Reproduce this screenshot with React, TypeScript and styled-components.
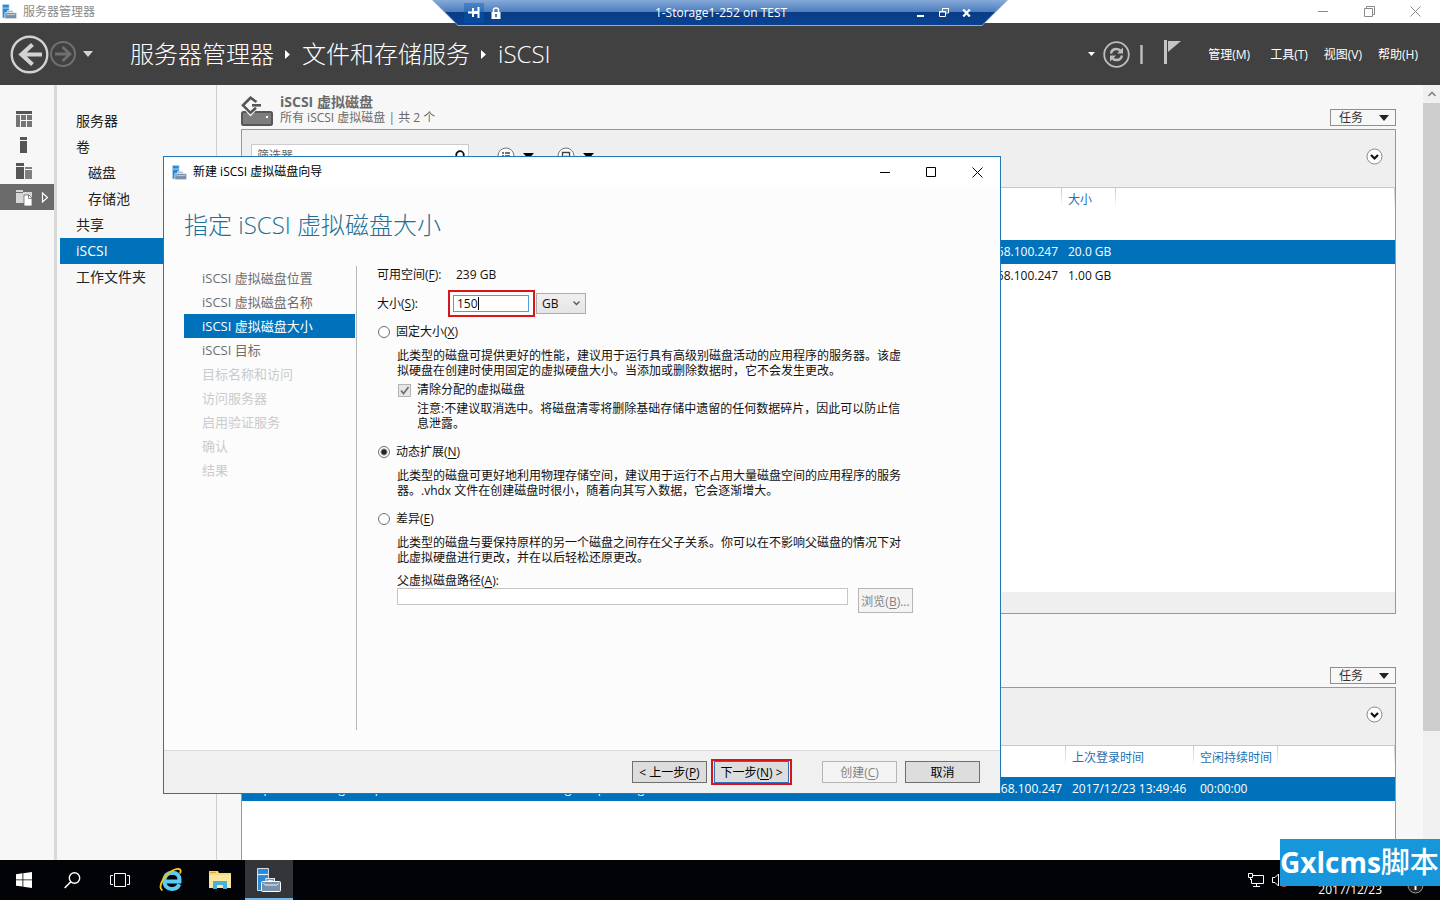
import React from "react";
import styled, { createGlobalStyle } from "styled-components";

const accent = "#0072bc";

const GlobalStyle = createGlobalStyle`
  * { box-sizing: border-box; }
  body { margin: 0; }
  body, button, input, select {
    font-family: "Open Sans", "Noto Sans CJK SC", sans-serif;
    font-size: 12px;
    line-height: 18px;
    color: #111;
  }
  button, input, select { margin: 0; padding: 0; border-radius: 0; }
  button { border: 0; background: transparent; }
  svg { display: block; flex: none; }
  u { text-underline-offset: 2px; }
`;

const Page = styled.div`
  position: relative;
  display: flex;
  flex-direction: column;
  height: 100vh;
  min-height: 860px;
  overflow: hidden;
  background: #f7f7f7;
`;

/* ---------- title bars ---------- */

const TitleBar = styled.header<{ $tall?: boolean; $inactive?: boolean }>`
  display: flex;
  align-items: center;
  flex: none;
  height: ${(p) => (p.$tall ? 30 : 23)}px;
  padding-left: ${(p) => (p.$tall ? 8 : 2)}px;
  padding-right: ${(p) => (p.$tall ? 0 : 2)}px;
  background: #fff;
  color: ${(p) => (p.$inactive ? "#8a8a8a" : "#000")};
`;

const TitleText = styled.span`
  flex: 1;
  margin-left: 6px;
  white-space: nowrap;
`;

const WindowButton = styled.button`
  display: flex;
  align-items: center;
  justify-content: center;
  width: 46px;
  height: 100%;
  color: inherit;
`;

const RemoteEdge = styled.div`
  position: absolute;
  top: 0;
  left: 50%;
  width: 576px;
  height: 26px;
  transform: translateX(-50%);
  clip-path: polygon(0 0, 100% 0, 550px 100%, 26px 100%);
  background: #8fa9cf;
`;

const RemoteBar = styled.div`
  display: flex;
  align-items: center;
  height: 25px;
  padding: 0 30px 0 32px;
  clip-path: polygon(1px 0, 575px 0, 550px 100%, 26px 100%);
  background: linear-gradient(#86a9d8 0, #4b7dbd 12px, #093c84 12px, #0a4291 100%);
  color: #fff;
`;

const RemoteSide = styled.div<{ $end?: boolean }>`
  display: flex;
  flex: 1;
  align-items: center;
  justify-content: ${(p) => (p.$end ? "flex-end" : "flex-start")};
`;

const RemoteButton = styled.button<{ $on?: boolean }>`
  display: flex;
  align-items: center;
  justify-content: center;
  width: ${(p) => (p.$on ? 20 : 23)}px;
  height: 20px;
  color: #fff;
  background: ${(p) => (p.$on ? "rgba(10, 90, 185, 0.4)" : "transparent")};
`;

/* ---------- dark header ---------- */

const Header = styled.div`
  display: flex;
  align-items: center;
  flex: none;
  height: 62px;
  padding: 0 22px 0 10px;
  background: #414141;
  color: #fff;
`;

const HeaderButton = styled.button`
  display: flex;
  align-items: center;
  justify-content: center;
`;

const Crumbs = styled.nav`
  display: flex;
  align-items: center;
  flex: 1;
  margin-left: 36px;
  white-space: nowrap;
`;

const Crumb = styled.a`
  color: #fff;
  font-size: 24px;
  line-height: 36px;
  font-weight: 300;
  text-decoration: none;
`;

const CrumbArrow = styled.svg`
  margin: 0 12px 0 11px;
`;

const HeaderTools = styled.div`
  display: flex;
  align-items: center;
  gap: 8px;
  margin-right: 24px;
`;

const MenuBar = styled.nav`
  display: flex;
  gap: 16px;
`;

const MenuButton = styled.button`
  padding-top: 2px;
  color: #fff;
  white-space: nowrap;
  &:first-child { margin-right: 4px; }
`;

/* ---------- body ---------- */

const Body = styled.div`
  display: flex;
  flex: 1;
  min-height: 0;
`;

const Rail = styled.nav`
  display: flex;
  flex-direction: column;
  flex: none;
  width: 57px;
  padding-top: 21px;
  border-right: 3px solid #d9d9d9;
`;

const RailButton = styled.button<{ $on?: boolean }>`
  display: flex;
  align-items: center;
  gap: 8px;
  height: 26px;
  padding-left: 15px;
  background: ${(p) => (p.$on ? "#6b6b6b" : "transparent")};
`;

const Side = styled.nav`
  display: flex;
  flex-direction: column;
  flex: none;
  width: 160px;
  padding: 23px 0 0 3px;
  border-right: 1px solid #cfcfcf;
`;

const SideLink = styled.a<{ $on?: boolean; $deep?: boolean }>`
  height: 26px;
  padding-left: ${(p) => (p.$deep ? 28 : 16)}px;
  font-size: 14px;
  line-height: 26px;
  color: ${(p) => (p.$on ? "#fff" : "#222")};
  background: ${(p) => (p.$on ? accent : "transparent")};
  text-decoration: none;
`;

const Content = styled.main`
  flex: 1;
  min-width: 0;
  padding: 0 27px 0 24px;
  overflow: hidden;
`;

const Section = styled.section`
  & + & { margin-top: 29px; }
`;

const SectionHead = styled.div`
  display: flex;
  align-items: flex-end;
  gap: 7px;
  height: 44px;
  padding-bottom: 3px;
`;

const SectionTitles = styled.div`
  flex: 1;
  color: #6a6a6a;
`;

const SectionTitle = styled.h2`
  margin: 0;
  font-size: 14px;
  line-height: 16px;
  font-weight: 700;
`;

const SectionSub = styled.p`
  margin: 0;
  line-height: 16px;
`;

const TaskButton = styled.button`
  display: flex;
  align-items: center;
  justify-content: space-between;
  width: 66px;
  height: 17px;
  padding: 0 6px 0 8px;
  border: 1px solid #8f8f8f;
  line-height: 15px;
  color: #333;
`;

const Panel = styled.div<{ $tall?: boolean }>`
  display: flex;
  flex-direction: column;
  min-height: ${(p) => (p.$tall ? 485 : 320)}px;
  border: 1px solid #999;
  background: #fff;
`;

const PanelTools = styled.div`
  display: flex;
  align-items: center;
  height: 58px;
  padding: 0 12px 5px 9px;
  border-bottom: 1px solid #c8c8c8;
  background: #efefef;
`;

const SearchBox = styled.label`
  display: flex;
  align-items: center;
  width: 218px;
  height: 24px;
  margin-right: 28px;
  padding: 0 3px 0 5px;
  border: 1px solid #ccc;
  background: #fff;
`;

const SearchInput = styled.input`
  flex: 1;
  min-width: 0;
  border: 0;
  background: transparent;
  outline: none;
  &::placeholder { color: #666; opacity: 1; }
`;

const ToolButton = styled.button`
  display: flex;
  align-items: center;
  gap: 8px;
  margin-right: 23px;
`;

const Expand = styled.button`
  margin-left: auto;
`;

const PanelFoot = styled.div`
  height: 21px;
  margin-top: auto;
  background: #efefef;
`;

const Grid = styled.table`
  width: 100%;
  table-layout: fixed;
  border-collapse: collapse;
`;

const Col = styled.col<{ $w?: number }>`
  width: ${(p) => (p.$w ? `${p.$w}px` : "auto")};
`;

const HeadCell = styled.th<{ $h: number }>`
  height: ${(p) => p.$h}px;
  padding: 3px 0 0 6px;
  font-weight: 400;
  text-align: left;
  vertical-align: top;
  white-space: nowrap;
  color: #1f70b0;
  background: linear-gradient(#c8c8c8, #fff) right top / 1px 20px no-repeat;
`;

const GridRow = styled.tr<{ $on?: boolean }>`
  height: 24px;
  color: ${(p) => (p.$on ? "#fff" : "#111")};
  background: ${(p) => (p.$on ? accent : "#fff")};
`;

const Cell = styled.td<{ $end?: boolean }>`
  padding: 0 4px 0 6px;
  text-align: ${(p) => (p.$end ? "right" : "left")};
  white-space: nowrap;
`;

const Scroll = styled.div`
  display: flex;
  flex-direction: column;
  align-items: center;
  flex: none;
  width: 17px;
  background: #f0f0f0;
`;

const ScrollUp = styled.button`
  display: flex;
  align-items: center;
  justify-content: center;
  width: 17px;
  height: 18px;
`;

const ScrollThumb = styled.div`
  width: 100%;
  height: 81%;
  background: #cdcdcd;
`;

/* ---------- wizard window ---------- */

const Wizard = styled.section`
  position: absolute;
  left: 163px;
  top: 156px;
  display: flex;
  flex-direction: column;
  width: 838px;
  height: 638px;
  border: 1px solid #2178b8;
  background: #fcfcfc;
`;

const WizardTitle = styled.h1`
  margin: 19px 20px 23px;
  font-size: 24px;
  line-height: 37px;
  font-weight: 300;
  color: #1f6f96;
`;

const WizardMain = styled.div`
  display: flex;
  flex: 1;
  padding: 0 20px 20px;
`;

const Steps = styled.ol`
  flex: none;
  width: 173px;
  margin: 0;
  padding: 0 1px 0 0;
  border-right: 1px solid #b9b9b9;
  list-style: none;
`;

const Step = styled.li<{ $state?: "on" | "off" }>`
  height: 24px;
  padding-left: 18px;
  font-size: 13px;
  line-height: 25px;
  color: ${(p) => (p.$state === "on" ? "#fff" : p.$state === "off" ? "#cbcbcb" : "#6e6e6e")};
  background: ${(p) => (p.$state === "on" ? accent : "transparent")};
`;

const Form = styled.form`
  flex: 1;
  padding-left: 20px;
`;

const FieldRow = styled.div`
  display: flex;
  align-items: center;
  margin-bottom: 6px;
`;

const FieldName = styled.label`
  width: 79px;
`;

const RedMark = styled.div`
  display: flex;
  padding: 3px;
  border: 2px solid #d9141b;
`;

const SizeMark = styled(RedMark)`
  position: relative;
  margin: 0 1px 0 -8px;
  width: 87px;
`;

const SizeInput = styled.input`
  width: 76px;
  height: 17px;
  padding: 0 3px;
  border: 1px solid #5a9bdc;
  outline: none;
  background: #fff;
  caret-color: transparent;
`;

const TextCaret = styled.span`
  position: absolute;
  left: 28px;
  top: 5px;
  width: 1px;
  height: 13px;
  background: #000;
`;

const UnitBox = styled.div`
  position: relative;
  display: flex;
  align-items: center;
`;

const UnitSelect = styled.select`
  appearance: none;
  width: 50px;
  height: 21px;
  padding: 0 0 0 5px;
  border: 1px solid #acacac;
  background: linear-gradient(#f0f0f0, #e5e5e5);
`;

const UnitArrow = styled.svg`
  position: absolute;
  right: 6px;
  pointer-events: none;
`;

const Choice = styled.label<{ $nested?: boolean }>`
  display: flex;
  align-items: center;
  gap: 6px;
  width: fit-content;
  height: 18px;
  margin: ${(p) => (p.$nested ? "3px 0 2px 21px" : "0 0 7px 1px")};
`;

const Radio = styled.input`
  appearance: none;
  width: 12px;
  height: 12px;
  border: 1px solid #707070;
  border-radius: 50%;
  background: #fff;
  &:checked { background: radial-gradient(circle, #222 2px, #fff 4px); }
`;

const Tick = styled.span`
  position: relative;
  display: flex;
  width: 13px;
  height: 13px;
  svg { position: absolute; inset: 0; pointer-events: none; }
`;

const TickInput = styled.input`
  appearance: none;
  width: 13px;
  height: 13px;
  border: 1px solid #b4b4b4;
  background: #e6e6e6;
`;

const Note = styled.p<{ $nested?: boolean }>`
  width: ${(p) => (p.$nested ? 488 : 508)}px;
  margin: 0 0 ${(p) => (p.$nested ? 12 : 0)}px ${(p) => (p.$nested ? 40 : 20)}px;
  line-height: 15px;
`;

const LooseNote = styled(Note)`
  margin-bottom: 12px;
`;

const PathBlock = styled.div`
  display: grid;
  grid-template-columns: 451px 55px;
  column-gap: 10px;
  margin: 8px 0 0 20px;
`;

const PathLabel = styled.label`
  grid-column: 1 / 3;
  line-height: 15px;
`;

const PathInput = styled.input`
  width: 100%;
  height: 17px;
  border: 1px solid #c6c6c6;
  background: #fff;
`;

const PushButton = styled.button<{ $focus?: boolean }>`
  width: 75px;
  height: 22px;
  padding-top: 1px;
  border: 1px solid #707070;
  background: #dddddd;
  color: #000;
  line-height: 19px;
  white-space: nowrap;
  ${(p) => (p.$focus ? "border-color: #2f6fc0;" : "")}
  &:disabled {
    border-color: #b5b5b5;
    background: #f4f4f4;
    color: #838383;
  }
`;

const BrowseButton = styled(PushButton)`
  width: 55px;
  height: 25px;
`;

const WizardFoot = styled.footer`
  display: flex;
  align-items: center;
  justify-content: flex-end;
  height: 43px;
  padding-right: 20px;
  border-top: 1px solid #dcdcdc;
  background: #f0f0f0;
`;

const NextMark = styled(RedMark)`
  margin: 0 30px 0 4px;
  padding: 0 1px;
`;

const CancelButton = styled(PushButton)`
  margin-left: 8px;
`;

/* ---------- taskbar ---------- */

const Taskbar = styled.footer`
  display: flex;
  flex: none;
  height: 40px;
  background: #020306;
`;

const TaskGroup = styled.div<{ $apart?: boolean }>`
  display: flex;
  gap: ${(p) => (p.$apart ? 1 : 0)}px;
  margin-left: ${(p) => (p.$apart ? 3 : 0)}px;
`;

const TaskItem = styled.button<{ $on?: boolean }>`
  display: flex;
  align-items: center;
  justify-content: center;
  width: 48px;
  height: 40px;
  border-bottom: 2px solid ${(p) => (p.$on ? "#76b9ed" : "transparent")};
  border-top: 2px solid transparent;
  background: ${(p) => (p.$on ? "#343539" : "transparent")};
`;

const Tray = styled.div`
  display: flex;
  align-items: center;
  gap: 8px;
  margin-left: auto;
  padding-right: 16px;
`;

const TrayDate = styled.time`
  align-self: flex-end;
  margin: 0 17px 0 21px;
  color: #fff;
  line-height: 20px;
`;

const Watermark = styled.div`
  position: absolute;
  right: 0;
  bottom: 14px;
  width: 160px;
  height: 47px;
  background: #1896dc;
  color: #fff;
  font-size: 28px;
  line-height: 46px;
  font-weight: 700;
  white-space: nowrap;
`;

const WatermarkTail = styled.span`
  font-size: 29px;
  font-weight: 500;
`;

/* ---------- drawings ---------- */

const ServerIcon = ({ size = 15, outline = "#fff" }: { size?: number; outline?: string }) => (
  <svg width={size} height={size} viewBox="0 0 24 24">
    <path d="M.5.500h11v22H.5z" fill="#2a8ad4" stroke={outline} strokeWidth=".8" />
    <path d="M1 6.500h10" stroke="#e4f1fb" strokeWidth="1.200" />
    <path d="M10 14v-2.500h6.500V14" fill="none" stroke="#fff" strokeWidth="3" />
    <path d="M10 14v-2.500h6.500V14" fill="none" stroke="#7d94ad" strokeWidth="1.400" />
    <rect x="4.500" y="13.500" width="19" height="10" rx="1" fill="#7790ac" stroke="#fff" />
    <path d="M6.500 15.500l2 1.500h11l2-1.500" fill="none" stroke="#fff" strokeWidth=".9" />
  </svg>
);

const MinIcon = ({ y = 6 }: { y?: number }) => (
  <svg width="11" height="11" viewBox="0 0 11 11">
    <path d={`M0 ${y - 0.5}h10`} stroke="currentColor" />
  </svg>
);

const CloseIcon = () => (
  <svg width="11" height="11" viewBox="0 0 11 11">
    <path d="M.5.5l10 10M10.500.5l-10 10" stroke="currentColor" />
  </svg>
);

const Caret = ({ w = 10, h = 5, fill = "#222" }: { w?: number; h?: number; fill?: string }) => (
  <svg width={w} height={h} viewBox="0 0 10 5" preserveAspectRatio="none">
    <path d="M0 0h10L5 5z" fill={fill} />
  </svg>
);

const ExpandIcon = () => (
  <svg width="17" height="17" viewBox="0 0 17 17">
    <circle cx="8.500" cy="8.500" r="7.500" fill="#fff" stroke="#888" />
    <path d="M5 7l3.500 3.500L12 7" fill="none" stroke="#111" strokeWidth="2.200" />
  </svg>
);

const DiskIcon = () => (
  <svg width="32" height="30" viewBox="0 0 32 30">
    <rect x="1" y="16" width="30" height="13" rx="1.500" fill="#7d7d7d" stroke="#565656" strokeWidth="2" />
    <path d="M9.500 20.500L0 10h7l2.500 1L12 10h7z" fill="#f7f7f7" />
    <path d="M15.500 6L9.500 1.800 2 9.300l7.500 7.500 5.500-5" fill="none" stroke="#565656" strokeWidth="2.600" />
    <path d="M11 9.300h9" stroke="#565656" strokeWidth="2.600" />
    <path d="M25 20h2v2h-2z" fill="#fff" />
  </svg>
);

const tasksButton = (
  <TaskButton type="button">
    任务
    <Caret w={10} h={6} />
  </TaskButton>
);

const sideItems: { text: string; deep?: boolean; on?: boolean }[] = [
  { text: "服务器" },
  { text: "卷" },
  { text: "磁盘", deep: true },
  { text: "存储池", deep: true },
  { text: "共享" },
  { text: "iSCSI", on: true },
  { text: "工作文件夹" },
];

const steps: { text: string; state?: "on" | "off" }[] = [
  { text: "iSCSI 虚拟磁盘位置" },
  { text: "iSCSI 虚拟磁盘名称" },
  { text: "iSCSI 虚拟磁盘大小", state: "on" },
  { text: "iSCSI 目标" },
  { text: "目标名称和访问", state: "off" },
  { text: "访问服务器", state: "off" },
  { text: "启用验证服务", state: "off" },
  { text: "确认", state: "off" },
  { text: "结果", state: "off" },
];

const menus = ["管理(M)", "工具(T)", "视图(V)", "帮助(H)"];

const RemoteConnection = () => (
  <RemoteEdge>
    <RemoteBar>
      <RemoteSide>
        <RemoteButton $on aria-label="固定">
          <svg width="12" height="11" viewBox="0 0 12 11">
            <path d="M0 5.500h5M5 1v9M10.500 0v11" stroke="currentColor" strokeWidth="2" />
            <path d="M5 5.500h5" stroke="currentColor" strokeWidth="3" />
          </svg>
        </RemoteButton>
        <RemoteButton aria-label="安全">
          <svg width="10" height="12" viewBox="0 0 10 12">
            <path d="M2.500 6V3q0-2 2.500-2t2.500 2v3" fill="none" stroke="currentColor" strokeWidth="1.500" />
            <path d="M.5 5h9v7h-9z" fill="currentColor" />
            <path d="M4.300 7h1.400v3H4.300z" fill="#0a3f8c" />
          </svg>
        </RemoteButton>
      </RemoteSide>
      <span>1-Storage1-252 on TEST</span>
      <RemoteSide $end>
        <RemoteButton aria-label="最小化">
          <svg width="7" height="11" viewBox="0 0 7 11">
            <path d="M0 9h7" stroke="currentColor" strokeWidth="2" />
          </svg>
        </RemoteButton>
        <RemoteButton aria-label="还原">
          <svg width="10" height="11" viewBox="0 0 10 11">
            <path d="M3.500 4V1.500h6V6H7M3 1.500h7M.5 4.500h6v5h-6zM0 5h7" fill="none" stroke="currentColor" />
          </svg>
        </RemoteButton>
        <RemoteButton aria-label="关闭">
          <svg width="9" height="8" viewBox="0 0 9 8">
            <path d="M1.200.5l6.600 7M7.800.5l-6.600 7" stroke="currentColor" strokeWidth="2.200" />
          </svg>
        </RemoteButton>
      </RemoteSide>
    </RemoteBar>
  </RemoteEdge>
);

const AppHeader = () => (
  <Header>
    <HeaderButton aria-label="后退">
      <svg width="39" height="39" viewBox="0 0 39 39">
        <circle cx="19.500" cy="19.500" r="17.800" fill="none" stroke="#d2d2d2" strokeWidth="2.400" />
        <path d="M32 19.500H11M22.500 9.500L11.500 19.500l11 10" fill="none" stroke="#d2d2d2" strokeWidth="4.200" />
      </svg>
    </HeaderButton>
    <HeaderButton aria-label="前进">
      <svg width="28" height="28" viewBox="0 0 28 28">
        <circle cx="14" cy="14" r="12" fill="none" stroke="#707070" strokeWidth="2" />
        <path d="M6 14h14M13.500 7L21 14l-7.500 7" fill="none" stroke="#707070" strokeWidth="2.800" />
      </svg>
    </HeaderButton>
    <HeaderButton aria-label="历史记录">
      <svg width="17" height="8" viewBox="0 0 17 8">
        <path d="M6 1h10l-5 6z" fill="#d2d2d2" />
      </svg>
    </HeaderButton>
    <Crumbs>
      <Crumb href="#">服务器管理器</Crumb>
      <CrumbArrow width="5" height="9" viewBox="0 0 5 9">
        <path d="M0 0l5 4.500L0 9z" fill="#fff" />
      </CrumbArrow>
      <Crumb href="#">文件和存储服务</Crumb>
      <CrumbArrow width="5" height="9" viewBox="0 0 5 9">
        <path d="M0 0l5 4.500L0 9z" fill="#fff" />
      </CrumbArrow>
      <Crumb href="#">iSCSI</Crumb>
    </Crumbs>
    <HeaderTools>
      <Caret w={7} h={4} fill="#fff" />
      <HeaderButton aria-label="刷新">
        <svg width="27" height="27" viewBox="0 0 27 27">
          <circle cx="13.500" cy="13.500" r="12.300" fill="none" stroke="#bdbdbd" strokeWidth="1.800" />
          <path d="M8 12.500q.8-4.500 5.500-4.500 3 0 4.800 2.500M19 14.500q-.8 4.500-5.500 4.500-3 0-4.800-2.500" fill="none" stroke="#bdbdbd" strokeWidth="2.400" />
          <path d="M20 6.500v6h-6zM7 20.500v-6h6z" fill="#bdbdbd" />
        </svg>
      </HeaderButton>
      <svg width="6" height="19" viewBox="0 0 6 19">
        <path d="M3.500 0v19" stroke="#bdbdbd" strokeWidth="2.500" />
      </svg>
      <HeaderButton aria-label="通知">
        <svg width="32" height="28" viewBox="0 0 32 28">
          <path d="M12 0h3v24h-3z" fill="#c4c4c4" />
          <path d="M16 1h13L16 12z" fill="#c4c4c4" />
        </svg>
      </HeaderButton>
    </HeaderTools>
    <MenuBar>
      {menus.map((m) => (
        <MenuButton key={m}>{m}</MenuButton>
      ))}
    </MenuBar>
  </Header>
);

const IconRail = () => (
  <Rail>
    <RailButton aria-label="仪表板">
      <svg width="18" height="16" viewBox="0 0 18 16">
        <path d="M1 0h16v3H1z" fill="#555" />
        <path d="M1 4h4v12H1zM6 4h5v5H6zM12 4h5v5h-5zM6 10h5v6H6zM12 10h5v6h-5z" fill="#757575" />
      </svg>
    </RailButton>
    <RailButton aria-label="本地服务器">
      <svg width="18" height="16" viewBox="0 0 18 16">
        <path d="M5 0h7v3H5zM5 4h7v12H5z" fill="#555" />
      </svg>
    </RailButton>
    <RailButton aria-label="所有服务器">
      <svg width="18" height="16" viewBox="0 0 18 16">
        <path d="M1 0h8v3H1zM1 4h8v12H1z" fill="#555" />
        <path d="M10 4h7v2h-7zM10 7h7v9h-7z" fill="#808080" />
      </svg>
    </RailButton>
    <RailButton $on aria-label="文件和存储服务">
      <svg width="18" height="17" viewBox="0 0 18 17">
        <path d="M1 1h7v2h9v11H1z" fill="#d6d6d6" />
        <path d="M1 3.500h7" stroke="#6b6b6b" />
        <path d="M9 6h5l3 3v8H9z" fill="#fff" stroke="#6b6b6b" strokeWidth=".8" />
        <path d="M13.500 6v3.500H17" fill="none" stroke="#6b6b6b" strokeWidth=".8" />
      </svg>
      <svg width="8" height="11" viewBox="0 0 8 11">
        <path d="M1.500 1l5 4.500-5 4.500z" fill="none" stroke="#fff" strokeWidth="1.200" />
      </svg>
    </RailButton>
  </Rail>
);

const WizardWindow = () => (
  <Wizard role="dialog" aria-labelledby="wizard-title">
    <TitleBar $tall>
      <ServerIcon />
      <TitleText>新建 iSCSI 虚拟磁盘向导</TitleText>
      <WindowButton aria-label="最小化"><MinIcon /></WindowButton>
      <WindowButton aria-label="最大化">
        <svg width="10" height="10" viewBox="0 0 10 10">
          <path d="M.5.5h9v9h-9z" fill="none" stroke="currentColor" />
        </svg>
      </WindowButton>
      <WindowButton aria-label="关闭"><CloseIcon /></WindowButton>
    </TitleBar>
    <WizardTitle id="wizard-title">指定 iSCSI 虚拟磁盘大小</WizardTitle>
    <WizardMain>
      <Steps>
        {steps.map((s) => (
          <Step key={s.text} $state={s.state}>{s.text}</Step>
        ))}
      </Steps>
      <Form onSubmit={(e) => e.preventDefault()}>
        <FieldRow>
          <FieldName as="span">可用空间(<u>F</u>):</FieldName>
          <span>239 GB</span>
        </FieldRow>
        <FieldRow>
          <FieldName htmlFor="size">大小(<u>S</u>):</FieldName>
          <SizeMark>
            <SizeInput id="size" defaultValue="150" autoFocus />
            <TextCaret />
          </SizeMark>
          <UnitBox>
            <UnitSelect aria-label="单位" defaultValue="GB">
              <option>GB</option>
            </UnitSelect>
            <UnitArrow width="7" height="5" viewBox="0 0 7 5">
              <path d="M.5.5l3 3 3-3" fill="none" stroke="#555" strokeWidth="1.300" />
            </UnitArrow>
          </UnitBox>
        </FieldRow>
        <Choice>
          <Radio type="radio" name="kind" />
          <span>固定大小(<u>X</u>)</span>
        </Choice>
        <Note>此类型的磁盘可提供更好的性能，建议用于运行具有高级别磁盘活动的应用程序的服务器。该虚拟硬盘在创建时使用固定的虚拟硬盘大小。当添加或删除数据时，它不会发生更改。</Note>
        <Choice $nested>
          <Tick>
            <TickInput type="checkbox" defaultChecked disabled />
            <svg width="13" height="13" viewBox="0 0 13 13">
              <path d="M3 6.500L5.500 9.500 10.500 3" fill="none" stroke="#707070" strokeWidth="1.800" />
            </svg>
          </Tick>
          <span>清除分配的虚拟磁盘</span>
        </Choice>
        <Note $nested>注意:不建议取消选中。将磁盘清零将删除基础存储中遗留的任何数据碎片，因此可以防止信息泄露。</Note>
        <Choice>
          <Radio type="radio" name="kind" defaultChecked />
          <span>动态扩展(<u>N</u>)</span>
        </Choice>
        <LooseNote>此类型的磁盘可更好地利用物理存储空间，建议用于运行不占用大量磁盘空间的应用程序的服务器。.vhdx 文件在创建磁盘时很小，随着向其写入数据，它会逐渐增大。</LooseNote>
        <Choice>
          <Radio type="radio" name="kind" />
          <span>差异(<u>E</u>)</span>
        </Choice>
        <Note>此类型的磁盘与要保持原样的另一个磁盘之间存在父子关系。你可以在不影响父磁盘的情况下对此虚拟硬盘进行更改，并在以后轻松还原更改。</Note>
        <PathBlock>
          <PathLabel htmlFor="parent">父虚拟磁盘路径(<u>A</u>):</PathLabel>
          <PathInput id="parent" disabled />
          <BrowseButton type="button" disabled>浏览(<u>B</u>)...</BrowseButton>
        </PathBlock>
      </Form>
    </WizardMain>
    <WizardFoot>
      <PushButton>&lt; 上一步(<u>P</u>)</PushButton>
      <NextMark>
        <PushButton $focus>下一步(<u>N</u>) &gt;</PushButton>
      </NextMark>
      <PushButton disabled>创建(<u>C</u>)</PushButton>
      <CancelButton>取消</CancelButton>
    </WizardFoot>
  </Wizard>
);

const TaskbarRow = () => (
  <Taskbar>
    <TaskGroup>
      <TaskItem aria-label="开始">
        <svg width="16" height="16" viewBox="0 0 16 16">
          <path d="M0 2.300L6.500 1.300v6.200H0zM7.300 1.200L16 0v7.500H7.300zM0 8.300h6.500v6.300L0 13.700zM7.300 8.300H16V16l-8.700-1.300z" fill="#fff" />
        </svg>
      </TaskItem>
      <TaskItem aria-label="搜索">
        <svg width="17" height="17" viewBox="0 0 17 17">
          <circle cx="10.500" cy="6" r="5.200" fill="none" stroke="#fff" strokeWidth="1.400" />
          <path d="M6.800 9.700L.7 16" stroke="#fff" strokeWidth="1.600" />
        </svg>
      </TaskItem>
      <TaskItem aria-label="任务视图">
        <svg width="20" height="14" viewBox="0 0 20 14">
          <path d="M4.500.5h11v13h-11zM3 2.500H.5v9H3M17 2.500h2.500v9H17" fill="none" stroke="#fff" />
        </svg>
      </TaskItem>
    </TaskGroup>
    <TaskGroup $apart>
      <TaskItem aria-label="Internet Explorer">
        <svg width="24" height="24" viewBox="0 0 24 24">
          <path d="M5.500 13.500h15q.6-8.500-7.300-8.700Q5.500 5.200 5.300 13q.3 8 8 8 5 0 7-4.700" fill="none" stroke="#5ccbf4" strokeWidth="4" />
          <path d="M3.500 22.500Q-.8 20 4 11.500 10.500 2 18.500.9 23 .8 21 5.500" fill="none" stroke="#f3c51f" strokeWidth="1.900" />
        </svg>
      </TaskItem>
      <TaskItem aria-label="文件资源管理器">
        <svg width="22" height="18" viewBox="0 0 22 18">
          <path d="M0 0h9l1 2h12v15H0z" fill="#f8d978" />
          <path d="M0 4h22v13H0z" fill="#fbe6a0" />
          <path d="M4 18v-8h14v8h-4v-4H8v4z" fill="#45b0dd" />
          <path d="M1 1.500h6" stroke="#e0a82e" />
        </svg>
      </TaskItem>
      <TaskItem $on aria-label="服务器管理器">
        <ServerIcon size={24} />
      </TaskItem>
    </TaskGroup>
    <Tray>
      <svg width="16" height="14" viewBox="0 0 16 14">
        <path d="M5 2.500h10.500v8H3.500V6M5 13.500h7M8.500 11v2.500M.5.500h4v4h-4zM2.500 4.500V7" fill="none" stroke="#fff" />
      </svg>
      <svg width="17" height="14" viewBox="0 0 17 14">
        <path d="M.5 4.500H3l3.500-3.500v12L3 9.500H.5z" fill="none" stroke="#fff" />
        <circle cx="12" cy="10" r="4" fill="#d83b3b" />
      </svg>
      <TrayDate>2017/12/23</TrayDate>
      <svg width="17" height="28" viewBox="0 0 17 28">
        <circle cx="8.500" cy="19.500" r="7.500" fill="#222" stroke="#999" />
        <path d="M8.500 15v9" stroke="#fff" strokeWidth="2" />
      </svg>
    </Tray>
  </Taskbar>
);

export default function App() {
  return (
    <Page>
      <GlobalStyle />
      <TitleBar $inactive>
        <ServerIcon />
        <TitleText>服务器管理器</TitleText>
        <WindowButton aria-label="最小化"><MinIcon /></WindowButton>
        <WindowButton aria-label="还原">
          <svg width="11" height="11" viewBox="0 0 11 11">
            <path d="M.5 2.500h8v8h-8zM2.500 2.500v-2h8v8h-2" fill="none" stroke="currentColor" />
          </svg>
        </WindowButton>
        <WindowButton aria-label="关闭"><CloseIcon /></WindowButton>
      </TitleBar>
      <AppHeader />
      <Body>
        <IconRail />
        <Side>
          {sideItems.map((s) => (
            <SideLink key={s.text} href="#" $on={s.on} $deep={s.deep}>{s.text}</SideLink>
          ))}
        </Side>
        <Content>
          <Section>
            <SectionHead>
              <DiskIcon />
              <SectionTitles>
                <SectionTitle>iSCSI 虚拟磁盘</SectionTitle>
                <SectionSub>所有 iSCSI 虚拟磁盘 | 共 2 个</SectionSub>
              </SectionTitles>
              {tasksButton}
            </SectionHead>
            <Panel $tall>
              <PanelTools>
                <SearchBox>
                  <SearchInput placeholder="筛选器" aria-label="筛选器" />
                  <svg width="12" height="13" viewBox="0 0 12 13">
                    <circle cx="7" cy="5" r="3.800" fill="none" stroke="#111" strokeWidth="1.800" />
                    <path d="M4.500 8L1 12" stroke="#111" strokeWidth="2" />
                  </svg>
                </SearchBox>
                <ToolButton aria-label="筛选条件">
                  <svg width="18" height="18" viewBox="0 0 18 18">
                    <circle cx="9" cy="9" r="8" fill="#fff" stroke="#777" />
                    <path d="M5 6h2M8 6h5M5 9h2M8 9h5M5 12h2M8 12h5" stroke="#444" strokeWidth="1.400" />
                  </svg>
                  <Caret w={11} h={6} fill="#000" />
                </ToolButton>
                <ToolButton aria-label="保存查询">
                  <svg width="18" height="18" viewBox="0 0 18 18">
                    <circle cx="9" cy="9" r="8" fill="#fff" stroke="#777" />
                    <path d="M5.500 5.500h7v7h-7zM7 9.500h4" fill="none" stroke="#444" strokeWidth="1.400" />
                  </svg>
                  <Caret w={11} h={6} fill="#000" />
                </ToolButton>
                <Expand aria-label="展开"><ExpandIcon /></Expand>
              </PanelTools>
              <Grid>
                <colgroup><Col $w={820} /><Col $w={54} /><Col /></colgroup>
                <thead>
                  <tr><HeadCell $h={52} /><HeadCell $h={52}>大小</HeadCell><HeadCell $h={52} /></tr>
                </thead>
                <tbody>
                  <GridRow $on><Cell $end>192.168.100.247</Cell><Cell>20.0 GB</Cell><Cell /></GridRow>
                  <GridRow><Cell $end>192.168.100.247</Cell><Cell>1.00 GB</Cell><Cell /></GridRow>
                </tbody>
              </Grid>
              <PanelFoot />
            </Panel>
          </Section>
          <Section>
            <SectionHead>
              <SectionTitles />
              {tasksButton}
            </SectionHead>
            <Panel>
              <PanelTools>
                <Expand aria-label="展开"><ExpandIcon /></Expand>
              </PanelTools>
              <Grid>
                <colgroup>
                  <Col $w={287} /><Col $w={368} /><Col $w={169} /><Col $w={128} /><Col $w={84} /><Col />
                </colgroup>
                <thead>
                  <tr>
                    <HeadCell $h={31} />
                    <HeadCell $h={31} />
                    <HeadCell $h={31} />
                    <HeadCell $h={31}>上次登录时间</HeadCell>
                    <HeadCell $h={31}>空闲持续时间</HeadCell>
                    <HeadCell $h={31} />
                  </tr>
                </thead>
                <tbody>
                  <GridRow $on>
                    <Cell>Depot.test.storage1.export</Cell>
                    <Cell>Storage1-vip-storage</Cell>
                    <Cell $end>192.168.100.247</Cell>
                    <Cell>2017/12/23 13:49:46</Cell>
                    <Cell>00:00:00</Cell>
                    <Cell />
                  </GridRow>
                </tbody>
              </Grid>
            </Panel>
          </Section>
        </Content>
        <Scroll>
          <ScrollUp aria-label="向上滚动">
            <svg width="8" height="6" viewBox="0 0 8 6">
              <path d="M.5 5L4 1.500 7.500 5" fill="none" stroke="#888" strokeWidth="1.600" />
            </svg>
          </ScrollUp>
          <ScrollThumb />
        </Scroll>
      </Body>
      <TaskbarRow />
      <RemoteConnection />
      <WizardWindow />
      <Watermark>
        Gxlcms<WatermarkTail>脚本</WatermarkTail>
      </Watermark>
    </Page>
  );
}
